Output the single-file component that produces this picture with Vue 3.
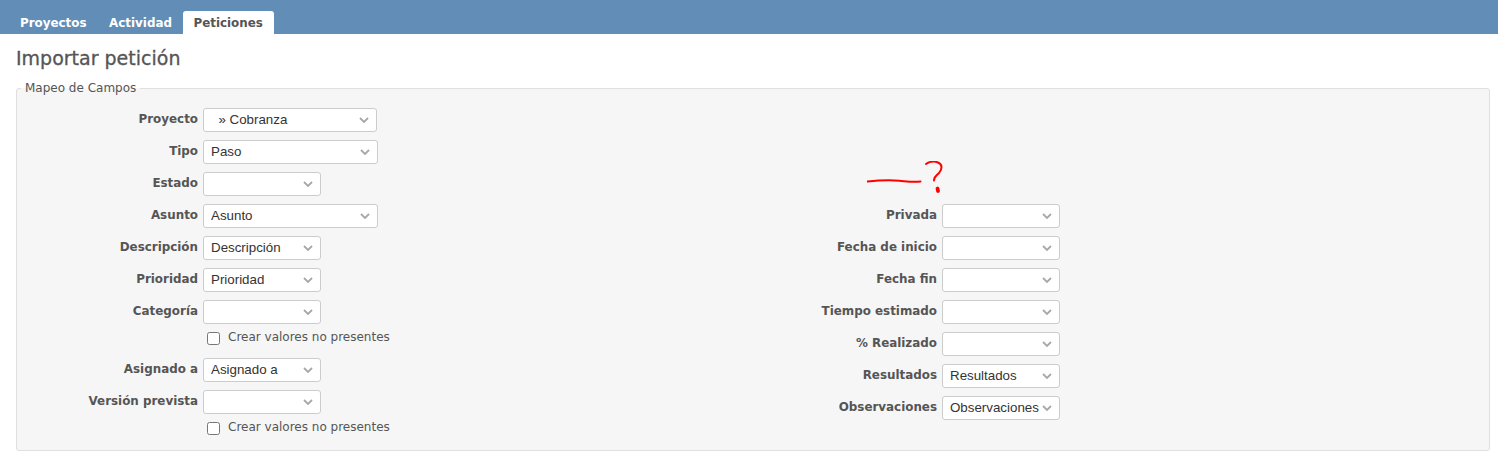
<template>
  <main class="page">
    <nav class="tabs">
      <a v-for="tab in tabs" :key="tab" class="tab" :class="{ selected: tab === 'Peticiones' }">{{ tab }}</a>
    </nav>

    <section class="content">
      <h2>Importar petición</h2>

      <fieldset class="box">
        <legend>Mapeo de Campos</legend>

        <div class="columns">
          <div class="col left">
            <template v-for="row in leftRows" :key="row.label">
              <div class="row">
                <label>{{ row.label }}</label>
                <div class="select-wrap" :class="row.size">
                  <select>
                    <option>{{ row.value }}</option>
                  </select>
                  <svg class="chevron" width="10" height="6" viewBox="0 0 10 6">
                    <path d="M1 1l4 4 4-4" fill="none" stroke="#a8a8a8" stroke-width="1.8" />
                  </svg>
                </div>
              </div>
              <div v-if="row.check" class="check-row">
                <input type="checkbox" />
                <span>Crear valores no presentes</span>
              </div>
            </template>
          </div>

          <div class="col right">
            <div v-for="row in rightRows" :key="row.label" class="row">
              <label>{{ row.label }}</label>
              <div class="select-wrap">
                <select>
                  <option>{{ row.value }}</option>
                </select>
                <svg class="chevron" width="10" height="6" viewBox="0 0 10 6">
                  <path d="M1 1l4 4 4-4" fill="none" stroke="#a8a8a8" stroke-width="1.8" />
                </svg>
              </div>
            </div>
          </div>
        </div>

        <!-- hand drawn note on top of the screenshot -->
        <svg class="scribble" width="84" height="36" viewBox="0 0 84 36">
          <path d="M.5 20.500c10-1 22-1.500 32-.8 7 .6 14 1.800 21 .8" fill="none" stroke="#f00" stroke-width="2" stroke-linecap="round" />
          <path d="M59 3c3-2 8-3 12-1.500 5 2 4 7 1 10.500-3 3-5 4-5 7.500" fill="none" stroke="#f00" stroke-width="2" stroke-linecap="round" />
          <path d="M70.500 27.500l.5 2.500" fill="none" stroke="#f00" stroke-width="3.800" stroke-linecap="round" />
        </svg>
      </fieldset>
    </section>
  </main>
</template>

<script setup>
const tabs = ['Proyectos', 'Actividad', 'Peticiones']

const leftRows = [
  { label: 'Proyecto', value: '\u00a0\u00a0» Cobranza', size: 'project' },
  { label: 'Tipo', value: 'Paso', size: 'wide' },
  { label: 'Estado', value: '' },
  { label: 'Asunto', value: 'Asunto', size: 'wide' },
  { label: 'Descripción', value: 'Descripción' },
  { label: 'Prioridad', value: 'Prioridad' },
  { label: 'Categoría', value: '', check: true },
  { label: 'Asignado a', value: 'Asignado a' },
  { label: 'Versión prevista', value: '', check: true },
]

const rightRows = [
  { label: 'Privada', value: '' },
  { label: 'Fecha de inicio', value: '' },
  { label: 'Fecha fin', value: '' },
  { label: 'Tiempo estimado', value: '' },
  { label: '% Realizado', value: '' },
  { label: 'Resultados', value: 'Resultados' },
  { label: 'Observaciones', value: 'Observaciones' },
]
</script>

<style>
html,
body {
  margin: 0;
  background: #fff;
}
</style>

<style scoped>
.page {
  font-family: "DejaVu Sans", Verdana, sans-serif;
  font-size: 12px;
  color: #555;
}

.tabs {
  display: flex;
  align-items: flex-end;
  height: 34px;
  padding-left: 9px;
  background: #628db6;
}

.tab {
  height: 23px;
  line-height: 24px;
  padding: 0 11px;
  font-size: 11.9px;
  font-weight: bold;
  color: #fff;
}

.tab + .tab {
  margin-left: 0.5px;
}

.tab.selected {
  padding: 0 11px 0 10px;
  background: #fff;
  color: #555;
  border-radius: 3px 3px 0 0;
}

.content {
  padding: 0 8px 0 16px;
}

h2 {
  margin: 0;
  padding-top: 12px;
  height: 28px;
  line-height: 24px;
  font-size: 19px;
  font-weight: normal;
  color: #555;
  -webkit-text-stroke: 0.3px #555;
}

.box {
  position: relative;
  box-sizing: border-box;
  height: 370px;
  margin: 7px 0 0;
  padding: 0;
  border: 1px solid #e0e0e0;
  border-radius: 3px;
  background: #f6f6f6;
}

legend {
  margin-left: 4px;
  padding: 0 4px;
  font-size: 12px;
  line-height: 14px;
  color: #555;
}

.columns {
  display: flex;
  padding-top: 13px;
}

.col {
  display: flex;
  flex-direction: column;
  gap: 8px;
}

.left {
  width: 737px;
  flex: none;
  margin-left: 3px;
}

.right {
  padding-top: 96px;
}

.left .row label {
  width: 178px;
}

.right .row label {
  width: 180px;
}

.row {
  display: flex;
  align-items: center;
  gap: 5px;
}

.row label {
  flex: none;
  text-align: right;
  font-size: 11.9px;
  font-weight: bold;
  position: relative;
  top: -1px;
}

.select-wrap {
  position: relative;
  width: 118px;
  height: 24px;
}

.select-wrap.project {
  width: 174px;
}

.select-wrap.wide {
  width: 175px;
}

select {
  display: block;
  box-sizing: border-box;
  width: 100%;
  height: 100%;
  padding: 0 0 2px 7px;
  border: 1px solid #ccc;
  border-radius: 3px;
  background: #fff;
  appearance: none;
  font-family: "Liberation Sans", Arial, sans-serif;
  font-size: 13.33px;
  color: #333;
}

.chevron {
  position: absolute;
  top: 9px;
  right: 8px;
  pointer-events: none;
}

.check-row {
  display: flex;
  align-items: center;
  height: 16px;
  margin: -3px 0 5px 183px;
}

.check-row input {
  width: 13px;
  height: 13px;
  margin: 2px 8px 0 4px;
}

.scribble {
  position: absolute;
  top: 66px;
  left: 850px;
}
</style>
